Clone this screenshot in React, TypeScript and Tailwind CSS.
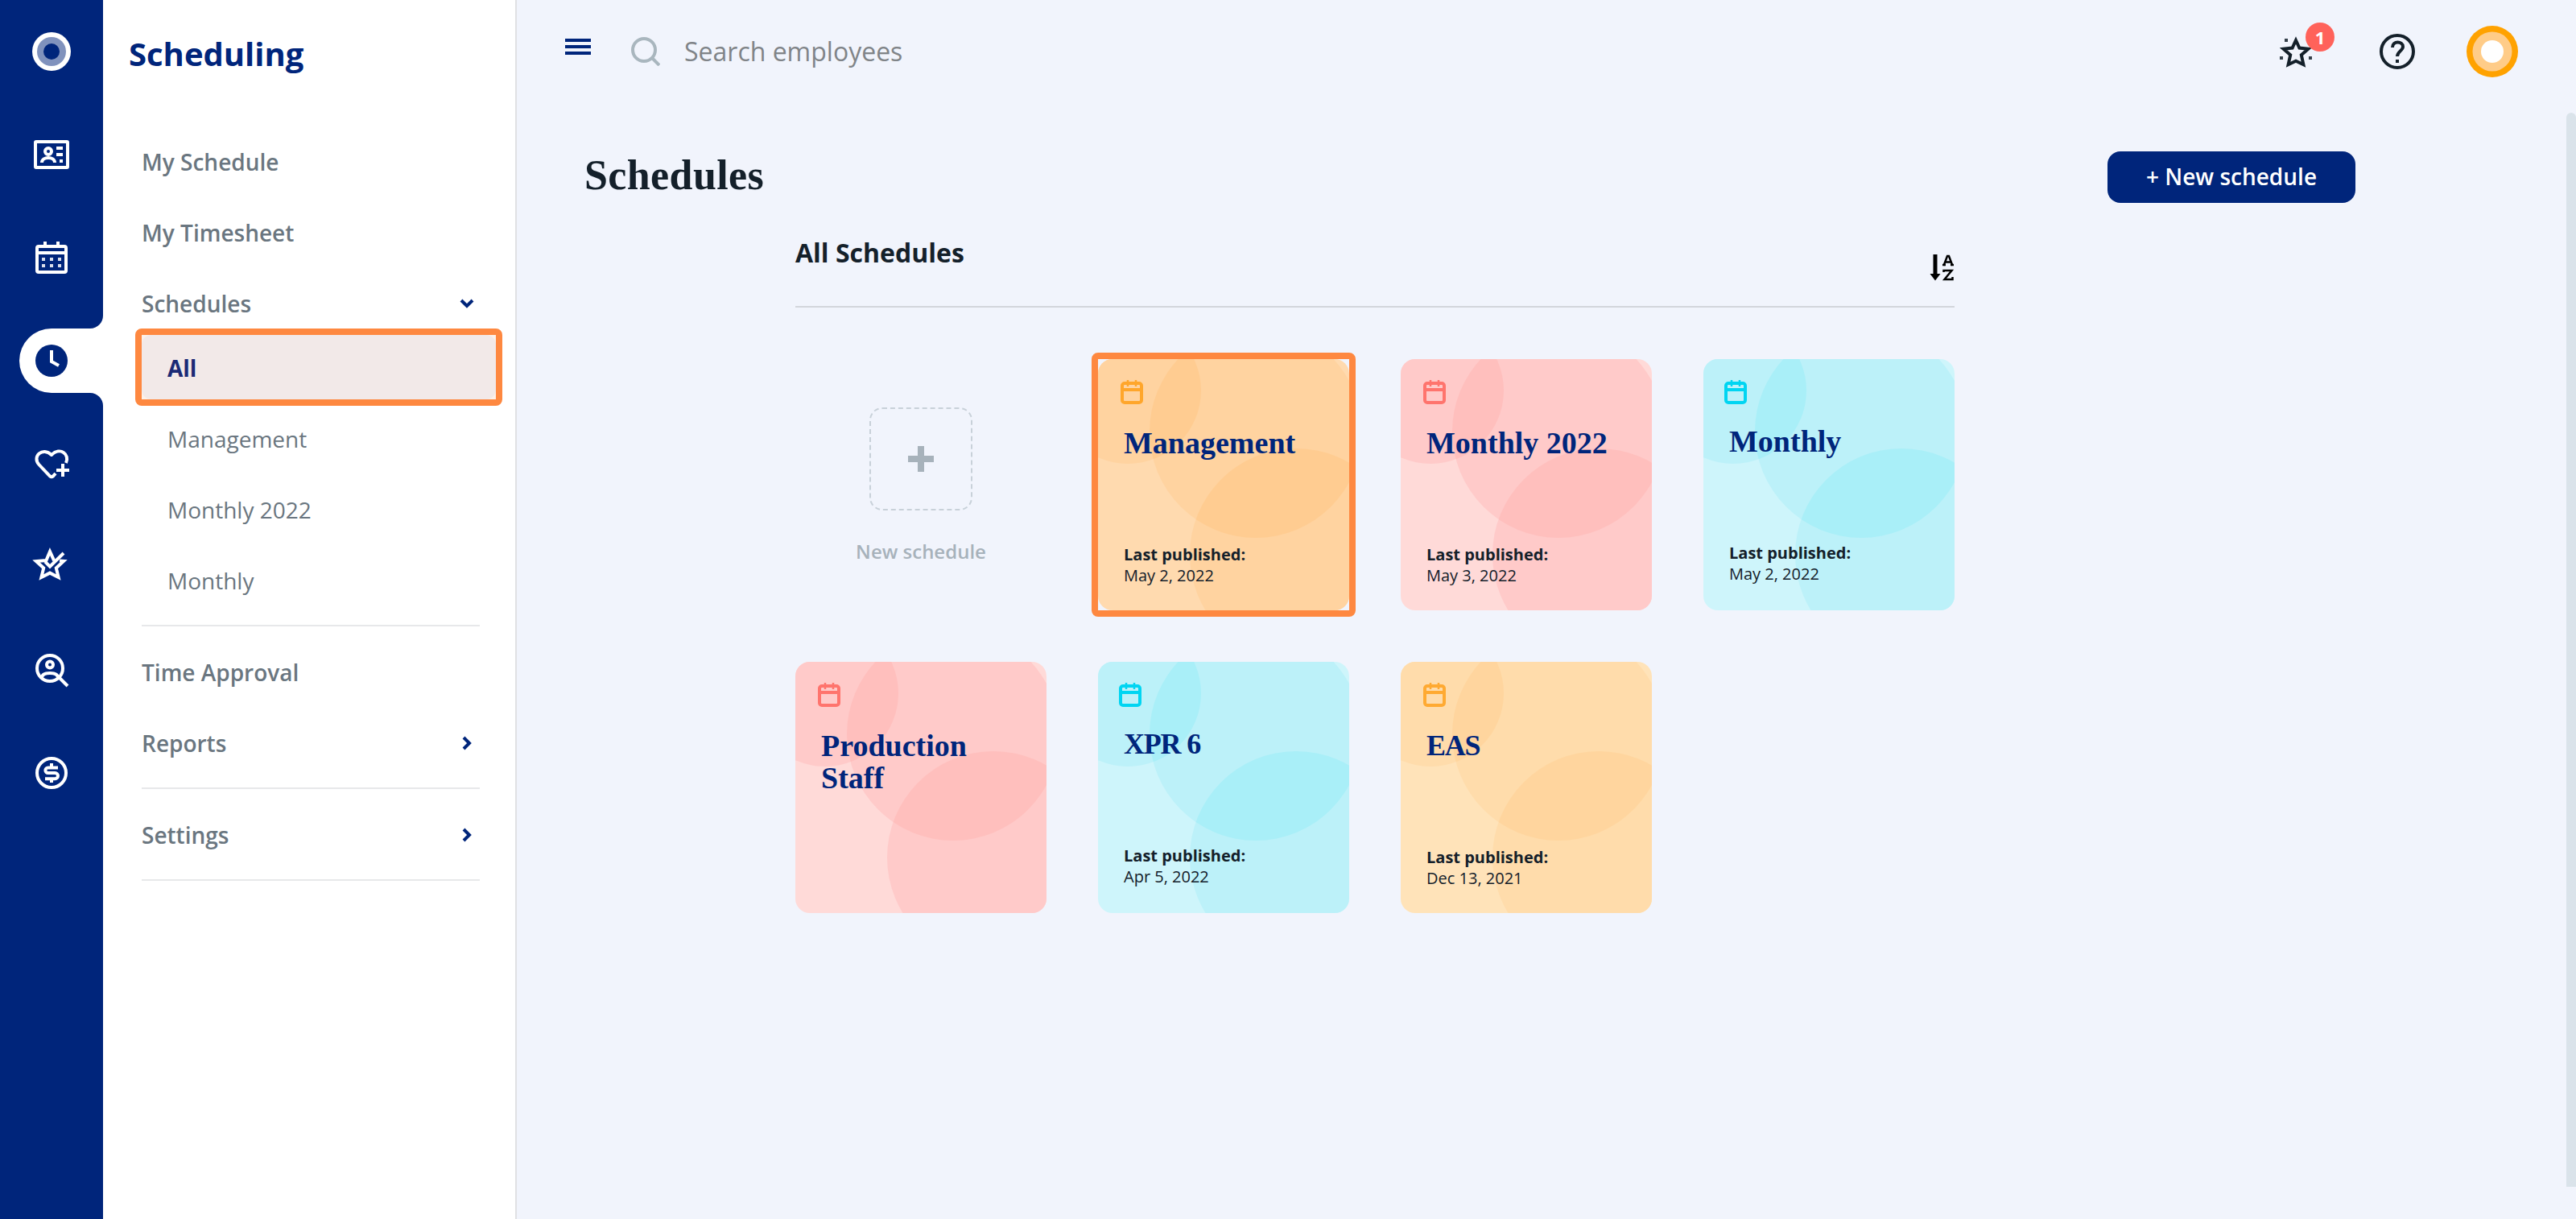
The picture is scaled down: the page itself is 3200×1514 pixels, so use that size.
import { ReactNode } from 'react';
import { clsx } from 'clsx';

type Tone = 'orange' | 'pink' | 'blue';

interface Schedule {
  name: string;
  tone: Tone;
  published?: string;
  highlighted?: boolean;
}

const schedules: Schedule[] = [
  { name: 'Management', tone: 'orange', published: 'May 2, 2022', highlighted: true },
  { name: 'Monthly 2022', tone: 'pink', published: 'May 3, 2022' },
  { name: 'Monthly', tone: 'blue', published: 'May 2, 2022' },
  { name: 'Production Staff', tone: 'pink' },
  { name: 'XPR 6', tone: 'blue', published: 'Apr 5, 2022' },
  { name: 'EAS', tone: 'orange', published: 'Dec 13, 2021' },
];

const tones = {
  orange: { base: '#ffe3b9', one: '#ffdcab', two: '#ffd59e', icon: '#ffaa32' },
  pink: { base: '#ffdad8', one: '#ffcac9', two: '#ffbfbd', icon: '#ff746d' },
  blue: { base: '#cef5fb', one: '#bcf1f9', two: '#a9eff8', icon: '#00d5f2' },
};

const highlightTone = { base: '#ffdaaf', one: '#ffd3a0', two: '#ffcc91', icon: '#ffa62b' };

const Icon = ({ children }: { children: ReactNode }) => (
  <svg width="48" height="48" viewBox="0 0 24 24" fill="none" stroke="white" strokeWidth="2">
    {children}
  </svg>
);

const Rail = () => (
  <nav className="flex w-32 shrink-0 flex-col bg-[#00257b]">
    <div className="flex h-32 items-center justify-center">
      <svg width="48" height="48" viewBox="0 0 48 48">
        <circle cx="24" cy="24" r="24" fill="#fff" />
        <circle cx="24" cy="24" r="18" fill="#8092bd" />
        <circle cx="24" cy="24" r="10" fill="#00257b" />
      </svg>
    </div>
    <div className="flex h-32 items-center justify-center">
      <Icon>
        <rect x="2" y="4" width="20" height="16" rx="0.5" />
        <circle cx="10" cy="10" r="2" />
        <path d="M6 17c0-2 2-3 4-3s4 1 4 3" />
        <path d="M15 8h4M15 12h4M17 16h2" />
      </Icon>
    </div>
    <div className="flex h-32 items-center justify-center">
      <Icon>
        <rect x="3" y="5" width="18" height="16" rx="1" />
        <path d="M3 9h18M8 2v3M16 2v3" />
        <path d="M6 13h2M11 13h2M16 13h2M6 17h2M11 17h2M16 17h2" strokeOpacity="0.85" />
      </Icon>
    </div>
    {/* Active tab runs into the white side panel */}
    <div className="flex h-32 items-center">
      <svg width="128" height="128" viewBox="0 0 128 128">
        <path d="M128 8a16 16 0 0 1-16 16H64a40 40 0 0 0 0 80h48a16 16 0 0 1 16 16z" fill="#fff" />
        <circle cx="64" cy="64" r="20" fill="#00257b" />
        <path d="M64 51v14l9 5" fill="none" stroke="#fff" strokeWidth="4" />
      </svg>
    </div>
    <div className="flex h-32 items-center justify-center">
      <Icon>
        <path
          d="M14.500 18 13 19.700q-1 .8-2 0L4.200 12.500C-.3 7.500 6.500 1.200 12 6.500c5.500-5.300 11.500-.3 9 5"
          strokeLinejoin="round"
        />
        <path d="M19 12v8M15 16h8" />
      </Icon>
    </div>
    <div className="flex h-32 items-center justify-center">
      <Icon>
        <path d="M13.600 8.200 11 2.500 8.700 8l-6.200.5 4.600 4.200-1.400 5.800 5.300-2.700 5.300 2.700-1.400-5.800 4.600-4.200-2.500-.2" />
        <path d="m8 8.800 3 3L19.500 3.500" />
      </Icon>
    </div>
    <div className="flex h-32 items-center justify-center">
      <Icon>
        <circle cx="11" cy="11" r="8" />
        <circle cx="11" cy="8.800" r="2" />
        <path d="M6 17c0-2 2-3 5-3s5 1 5 3M16.500 16.500l5.500 5.500" />
      </Icon>
    </div>
    <div className="flex h-32 items-center justify-center">
      <Icon>
        <circle cx="12" cy="12" r="9" />
        <path d="M16 8.800H9.800a1.600 1.600 0 0 0 0 3.200h4.400a1.600 1.600 0 0 1 0 3.600H8M12 6v3M12 15.500V18" />
      </Icon>
    </div>
  </nav>
);

const Chevron = ({ down }: { down?: boolean }) => (
  <svg width="20" height="20" viewBox="0 0 20 20" fill="none" stroke="#00257b" strokeWidth="4">
    <path d={down ? 'm3 6 7 7 7-7' : 'm6 3 7 7-7 7'} />
  </svg>
);

const MenuItem = ({ label, chevron }: { label: string; chevron?: 'down' | 'right' }) => (
  <div className="flex h-[88px] items-center justify-between pr-[6px] text-[28px] font-semibold text-[#6a7680]">
    <span>{label}</span>
    {chevron && <Chevron down={chevron === 'down'} />}
  </div>
);

const SubItem = ({ label }: { label: string }) => (
  <div className="flex h-[88px] items-center pl-8 text-[28px] text-[#6a7680]">{label}</div>
);

const Sidebar = () => (
  <aside className="w-[514px] shrink-0 border-r-2 border-[#e0e1e4] bg-white">
    <h2 className="flex h-[134px] items-center pl-8 text-[40px] font-bold text-[#00257b]">Scheduling</h2>
    <div className="ml-12 mt-[23px] w-[420px]">
      <MenuItem label="My Schedule" />
      <MenuItem label="My Timesheet" />
      <MenuItem label="Schedules" chevron="down" />
      <div className="-ml-2 -mt-[13px] flex h-24 w-[456px] items-center rounded-lg border-8 border-[#fe8840] bg-[#fdf1e9]">
        <div className="flex h-full w-full items-center rounded-xl bg-[#f2e9e8] pl-8 pt-[2px] text-[28px] font-bold text-[#1b2a75]">
          All
        </div>
      </div>
      <div className="-mt-[3px]">
        <SubItem label="Management" />
        <SubItem label="Monthly 2022" />
        <SubItem label="Monthly" />
      </div>
      <div className="mb-[13px] mt-[11px] border-t-2 border-[#e7e8ea]" />
      <MenuItem label="Time Approval" />
      <MenuItem label="Reports" chevron="right" />
      <div className="mb-[13px] mt-[11px] border-t-2 border-[#e7e8ea]" />
      <MenuItem label="Settings" chevron="right" />
      <div className="mt-[11px] border-t-2 border-[#e7e8ea]" />
    </div>
  </aside>
);

const TopBar = () => (
  <header className="flex h-32 items-center pl-[60px] pr-[72px]">
    <div className="-mt-3 flex w-8 flex-col gap-1">
      <div className="h-1 bg-[#00257b]" />
      <div className="h-1 bg-[#00257b]" />
      <div className="h-1 bg-[#00257b]" />
    </div>
    <svg className="ml-[50px]" width="36" height="36" viewBox="0 0 36 36" fill="none" stroke="#a9b6be" strokeWidth="4">
      <circle cx="16" cy="16" r="14" />
      <path d="m26 26 9 9" />
    </svg>
    <span className="ml-[30px] text-[32px] text-[#808488]">Search employees</span>
    <div className="ml-auto flex items-center">
      <div className="relative">
        <svg width="48" height="48" viewBox="0 0 24 24" fill="none" stroke="#14202a" strokeWidth="2">
          <path d="m12 5 2.200 4.800 5.500.600-4.300 3.700 1.300 6-4.700-2.200-4.700 2.200 1.300-6-4.300-3.700 5.500-.600z" />
          <path d="M5 5h2M2 16h2M20 16h2" strokeOpacity="0.85" />
        </svg>
        <div className="absolute left-[36px] top-[-12px] flex h-9 w-9 items-center justify-center rounded-full bg-[#ff625a] text-[22px] font-bold text-white">
          1
        </div>
      </div>
      <svg className="ml-[78px]" width="48" height="48" viewBox="0 0 24 24" fill="none" stroke="#14202a" strokeWidth="2">
        <circle cx="12" cy="12" r="10" />
        <path d="M9 9.500c0-4.500 6.500-4 6.500-.5C15.500 11.500 12 12 12 15M12 17v2" />
      </svg>
      <svg className="ml-[62px]" width="64" height="64" viewBox="0 0 64 64">
        <circle cx="32" cy="32" r="32" fill="#ffa200" />
        <circle cx="32" cy="32" r="24.500" fill="#ffcc88" />
        <circle cx="32" cy="32" r="14" fill="#fff" />
      </svg>
    </div>
  </header>
);

const ScheduleCard = ({ schedule }: { schedule: Schedule }) => {
  const { name, tone, published, highlighted } = schedule;
  const colors = highlighted ? highlightTone : tones[tone];
  const blue = tone === 'blue';
  const allCaps = name === name.toUpperCase();
  const clipId = `clip-${name.replace(/ /g, '-')}`;

  return (
    <div className="relative h-[312px] w-[312px]">
      <div className="relative h-full w-full overflow-hidden rounded-[18px]">
        {/* Overlapping circles behind the text */}
        <svg className="absolute inset-0" width="312" height="312" viewBox="0 0 312 312">
          <defs>
            <clipPath id={clipId}>
              <circle cx="196" cy="90" r="132" />
            </clipPath>
          </defs>
          <rect width="312" height="312" fill={colors.base} />
          <circle cx="37" cy="39" r="91" fill={colors.one} />
          <circle cx="196" cy="90" r="132" fill={colors.one} />
          <circle cx="246" cy="243" r="132" fill={colors.one} />
          <g clipPath={`url(#${clipId})`} fill={colors.two}>
            <circle cx="37" cy="39" r="91" />
            <circle cx="246" cy="243" r="132" />
          </g>
        </svg>
        <div className="relative flex h-full flex-col px-8 pb-[30px] pt-[26px]">
          <svg
            className={blue ? '-ml-[6px]' : '-ml-1'}
            width="28"
            height="30"
            viewBox="0 0 28 30"
            fill="none"
            stroke={colors.icon}
          >
            <rect x="2" y="4" width="24" height="24" rx="3" strokeWidth="4" />
            <path d="M2 12h24" strokeWidth="4" />
            <path d="M9 0v8M19 0v8" strokeWidth="2.500" />
          </svg>
          <h3
            className={clsx(
              "w-[240px] font-['Liberation_Serif',serif] font-bold leading-10 text-[#00257b]",
              allCaps ? 'text-[36px] tracking-[-1.2px]' : 'text-[38px]',
              blue ? 'mt-[26px]' : 'mt-7'
            )}
          >
            {name}
          </h3>
          {published && (
            <div className={clsx('mt-auto text-[20px] leading-[26px] text-[#14202a]', blue && 'pb-[2px]')}>
              <p className="font-bold">Last published:</p>
              <p>{published}</p>
            </div>
          )}
        </div>
      </div>
      {highlighted && <div className="absolute -inset-2 rounded-lg border-8 border-[#fe8840]" />}
    </div>
  );
};

const App = () => {
  return (
    <div className="flex h-[1514px] w-[3200px] overflow-hidden bg-[#f1f4fc] font-['Open_Sans',sans-serif]">
      <Rail />
      <Sidebar />
      <div className="flex min-w-0 flex-1 flex-col">
        <TopBar />
        <div className="flex flex-1">
          <main className="flex-1 pl-[84px] pt-[60px]">
            <div className="flex h-16 w-[2200px] items-center justify-between">
              <h1 className="pb-1 font-['Liberation_Serif',serif] text-[52px] font-bold tracking-[0.4px] text-[#14202a]">
                Schedules
              </h1>
              <button className="h-16 w-[308px] rounded-2xl bg-[#00257b] pb-[2px] text-[28px] font-semibold text-white">
                + New schedule
              </button>
            </div>
            <section className="ml-[262px] mt-[36px] w-[1440px]">
              <div className="flex h-[94px] justify-between border-b-2 border-[#d3d6dc]">
                <h2 className="pt-[2px] text-[32px] font-bold text-[#14202a]">All Schedules</h2>
                <svg className="mt-7" width="32" height="34" viewBox="0 0 32 34" fill="none" stroke="#000">
                  <path d="M8 0v26" strokeWidth="5" />
                  <path d="M1.500 24h13L8 32.500z" fill="#000" stroke="none" />
                  <path d="m18.500 14 4.500-12h2l4.500 12M20 9.500h8M17 13h4M27 13h4" strokeWidth="2.500" />
                  <path d="M18.500 22v-2h10l-9 11h10v-3" strokeWidth="2.500" />
                </svg>
              </div>
              <div className="mt-16 grid grid-cols-4 gap-16">
                <div className="flex h-[312px] flex-col items-center pt-[60px]">
                  <div className="flex h-32 w-32 items-center justify-center rounded-2xl border-2 border-dashed border-[#c8d1d9]">
                    <svg width="32" height="32" viewBox="0 0 32 32" stroke="#a7b2bb" strokeWidth="8">
                      <path d="M16 0v32M0 16h32" />
                    </svg>
                  </div>
                  <span className="mt-[33px] text-[24px] font-semibold text-[#a7b2bb]">New schedule</span>
                </div>
                {schedules.map(schedule => (
                  <ScheduleCard key={schedule.name} schedule={schedule} />
                ))}
              </div>
            </section>
          </main>
          {/* Scroll thumb */}
          <div className="mt-3 h-[1334px] w-3 rounded-t-md bg-[#dae3ea]" />
        </div>
      </div>
    </div>
  );
};

export default App;
